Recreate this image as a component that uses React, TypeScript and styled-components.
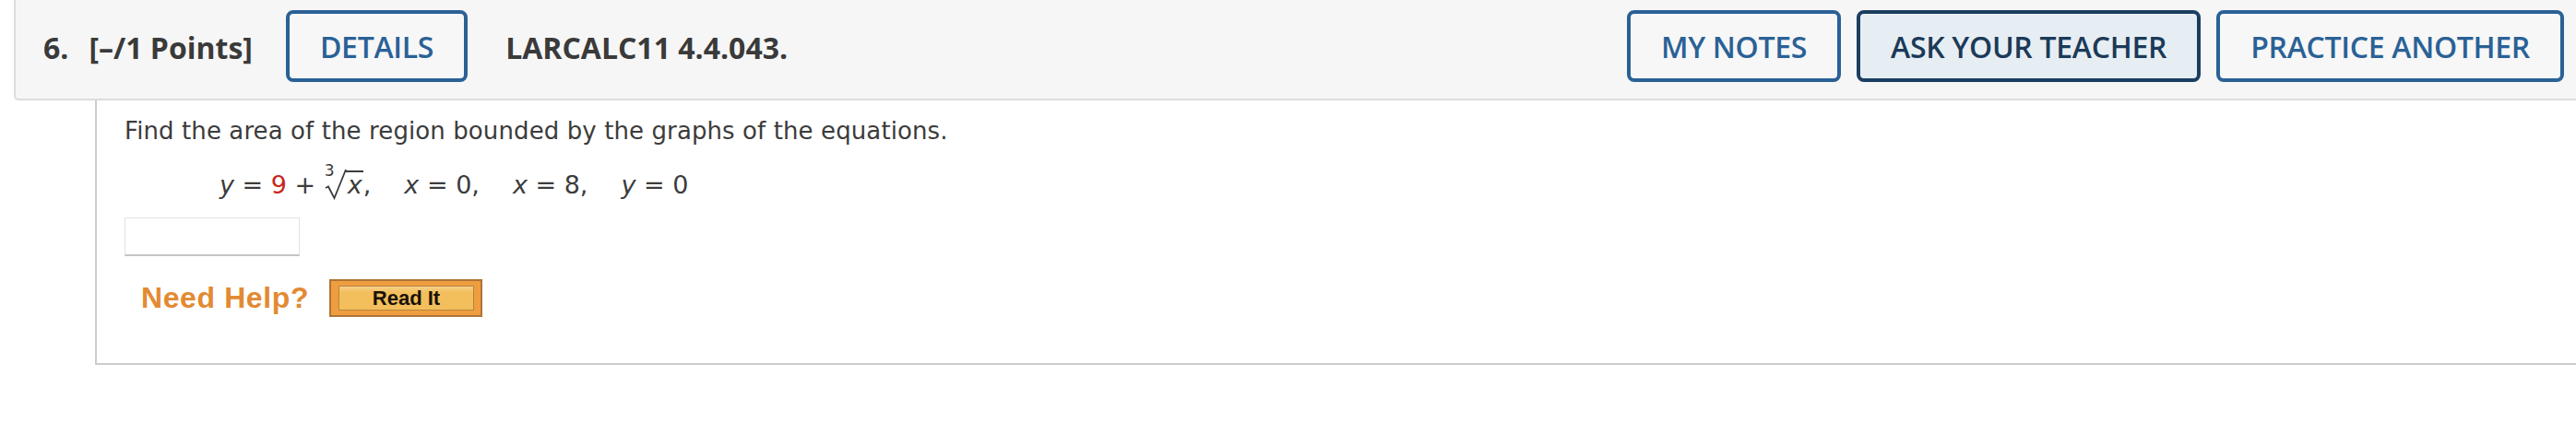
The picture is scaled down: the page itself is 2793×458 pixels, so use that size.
import styled, { createGlobalStyle } from "styled-components"

const GlobalStyle = createGlobalStyle`
  html, body {
    margin: 0;
    padding: 0;
    background: #ffffff;
    overflow: hidden;
  }
`

type HeaderButtonProps = {
  $active?: boolean
}

export default function App() {
  return (
    <>
      <GlobalStyle />
      <Page>
        <QuestionHeader>
          <Title>
            <span>6.</span>
            <span>[–/1 Points]</span>
          </Title>
          <HeaderButton>DETAILS</HeaderButton>
          <Reference>LARCALC11 4.4.043.</Reference>
          <HeaderActions>
            <HeaderButton>MY NOTES</HeaderButton>
            <HeaderButton $active>ASK YOUR TEACHER</HeaderButton>
            <HeaderButton>PRACTICE ANOTHER</HeaderButton>
          </HeaderActions>
        </QuestionHeader>
        <QuestionBody>
          <Prompt>Find the area of the region bounded by the graphs of the equations.</Prompt>
          <Equation>
            <Term>
              <Var>y</Var> = <Red>9</Red> +{" "}
              <Radical>
                <Index>3</Index>
                <RootSign viewBox="0 0 24 34" width="24" height="34">
                  <path
                    d="M1 21 L4 19.5 L10.5 32 L23 1"
                    fill="none"
                    stroke="#3c3c3c"
                    strokeWidth="1.8"
                    strokeLinejoin="miter"
                  />
                </RootSign>
                <Radicand>
                  <Var>x</Var>
                </Radicand>
              </Radical>
              ,
            </Term>
            <Term>
              <Var>x</Var> = 0,
            </Term>
            <Term>
              <Var>x</Var> = 8,
            </Term>
            <Term>
              <Var>y</Var> = 0
            </Term>
          </Equation>
          <AnswerInput type="text" />
          <HelpRow>
            <NeedHelp>Need Help?</NeedHelp>
            <ReadItButton>
              <ReadItInner>Read It</ReadItInner>
            </ReadItButton>
          </HelpRow>
        </QuestionBody>
      </Page>
    </>
  )
}

const Page = styled.div`
  width: 2793px;
  height: 458px;
  overflow: hidden;
`

const QuestionHeader = styled.div`
  margin-left: 15px;
  height: 109px;
  box-sizing: border-box;
  padding: 11px 13px 18px 30px;
  display: flex;
  align-items: center;
  background: #f6f6f6;
  border-left: 2px solid #dcdcdc;
  border-bottom: 2px solid #dcdcdc;
  border-bottom-left-radius: 5px;
  font-family: "Open Sans", "DejaVu Sans", sans-serif;
`

const Title = styled.div`
  display: flex;
  gap: 22px;
  font-size: 32px;
  font-weight: 700;
  color: #3a3a3a;
  margin-right: 36px;
  margin-top: 2px;
`

const Reference = styled.div`
  margin-left: 41px;
  font-size: 32px;
  font-weight: 700;
  color: #3a3a3a;
  margin-top: 2px;
`

const HeaderActions = styled.div`
  margin-left: auto;
  display: flex;
  gap: 17px;
`

const HeaderButton = styled.button<HeaderButtonProps>`
  height: 78px;
  box-sizing: border-box;
  padding: 0 33px;
  border-radius: 8px;
  border: 4px solid ${(p) => (p.$active ? "#1b3e60" : "#2a6196")};
  background: ${(p) => (p.$active ? "#e7eef3" : "#f7f7f7")};
  color: ${(p) => (p.$active ? "#1b3a58" : "#2a6196")};
  font-family: "Open Sans", "DejaVu Sans", sans-serif;
  font-size: 32px;
  font-weight: 600;
  letter-spacing: -0.3px;
  cursor: pointer;
`

const QuestionBody = styled.div`
  margin-left: 103px;
  height: 287px;
  box-sizing: border-box;
  border-left: 2px solid #cccccc;
  border-bottom: 2px solid #cccccc;
  padding: 15px 0 0 30px;
  font-family: "DejaVu Sans", Verdana, sans-serif;
  color: #3c3c3c;
`

const Prompt = styled.p`
  margin: 0;
  font-size: 26px;
  line-height: 36px;
  letter-spacing: 0.1px;
`

const Equation = styled.div`
  margin: 21px 0 0 103px;
  height: 40px;
  display: flex;
  align-items: baseline;
  gap: 36px;
  font-size: 27px;
  line-height: 40px;
`

const Term = styled.span`
  white-space: nowrap;
`

const Var = styled.i`
  font-style: italic;
`

const Red = styled.span`
  color: #c8261b;
`

const Radical = styled.span`
  display: inline-block;
  position: relative;
  margin-left: 1px;
`

const Index = styled.span`
  position: absolute;
  left: 0px;
  top: -4px;
  font-size: 17px;
  line-height: 1;
`

const RootSign = styled.svg`
  display: inline-block;
  vertical-align: -7px;
`

const Radicand = styled.span`
  display: inline-block;
  border-top: 2px solid #3c3c3c;
  padding: 0 1px 0 2px;
  line-height: 28px;
  margin-left: -1px;
`

const AnswerInput = styled.input`
  display: block;
  margin-top: 15px;
  width: 190px;
  height: 42px;
  box-sizing: border-box;
  border: 1px solid #e2e2e2;
  border-bottom: 2px solid #c4c4c4;
  background: #ffffff;
  outline: none;
`

const HelpRow = styled.div`
  display: flex;
  align-items: center;
  gap: 22px;
  margin: 25px 0 0 18px;
`

const NeedHelp = styled.span`
  font-family: "Liberation Sans", Arial, sans-serif;
  font-size: 32px;
  font-weight: 700;
  color: #e38a33;
  letter-spacing: 0.6px;
`

const ReadItButton = styled.div`
  width: 166px;
  height: 41px;
  box-sizing: border-box;
  padding: 5px 7px 5px 8px;
  background: #ee9d3f;
  border: 2px solid #ad7438;
  display: flex;
`

const ReadItInner = styled.div`
  flex: 1;
  display: flex;
  align-items: center;
  justify-content: center;
  background: linear-gradient(#f6d08a 0%, #f2bf5c 25%, #f2bf5c 100%);
  border: 1px solid #b8853f;
  font-family: "Liberation Sans", Arial, sans-serif;
  font-size: 22px;
  font-weight: 700;
  color: #1a1208;
`
